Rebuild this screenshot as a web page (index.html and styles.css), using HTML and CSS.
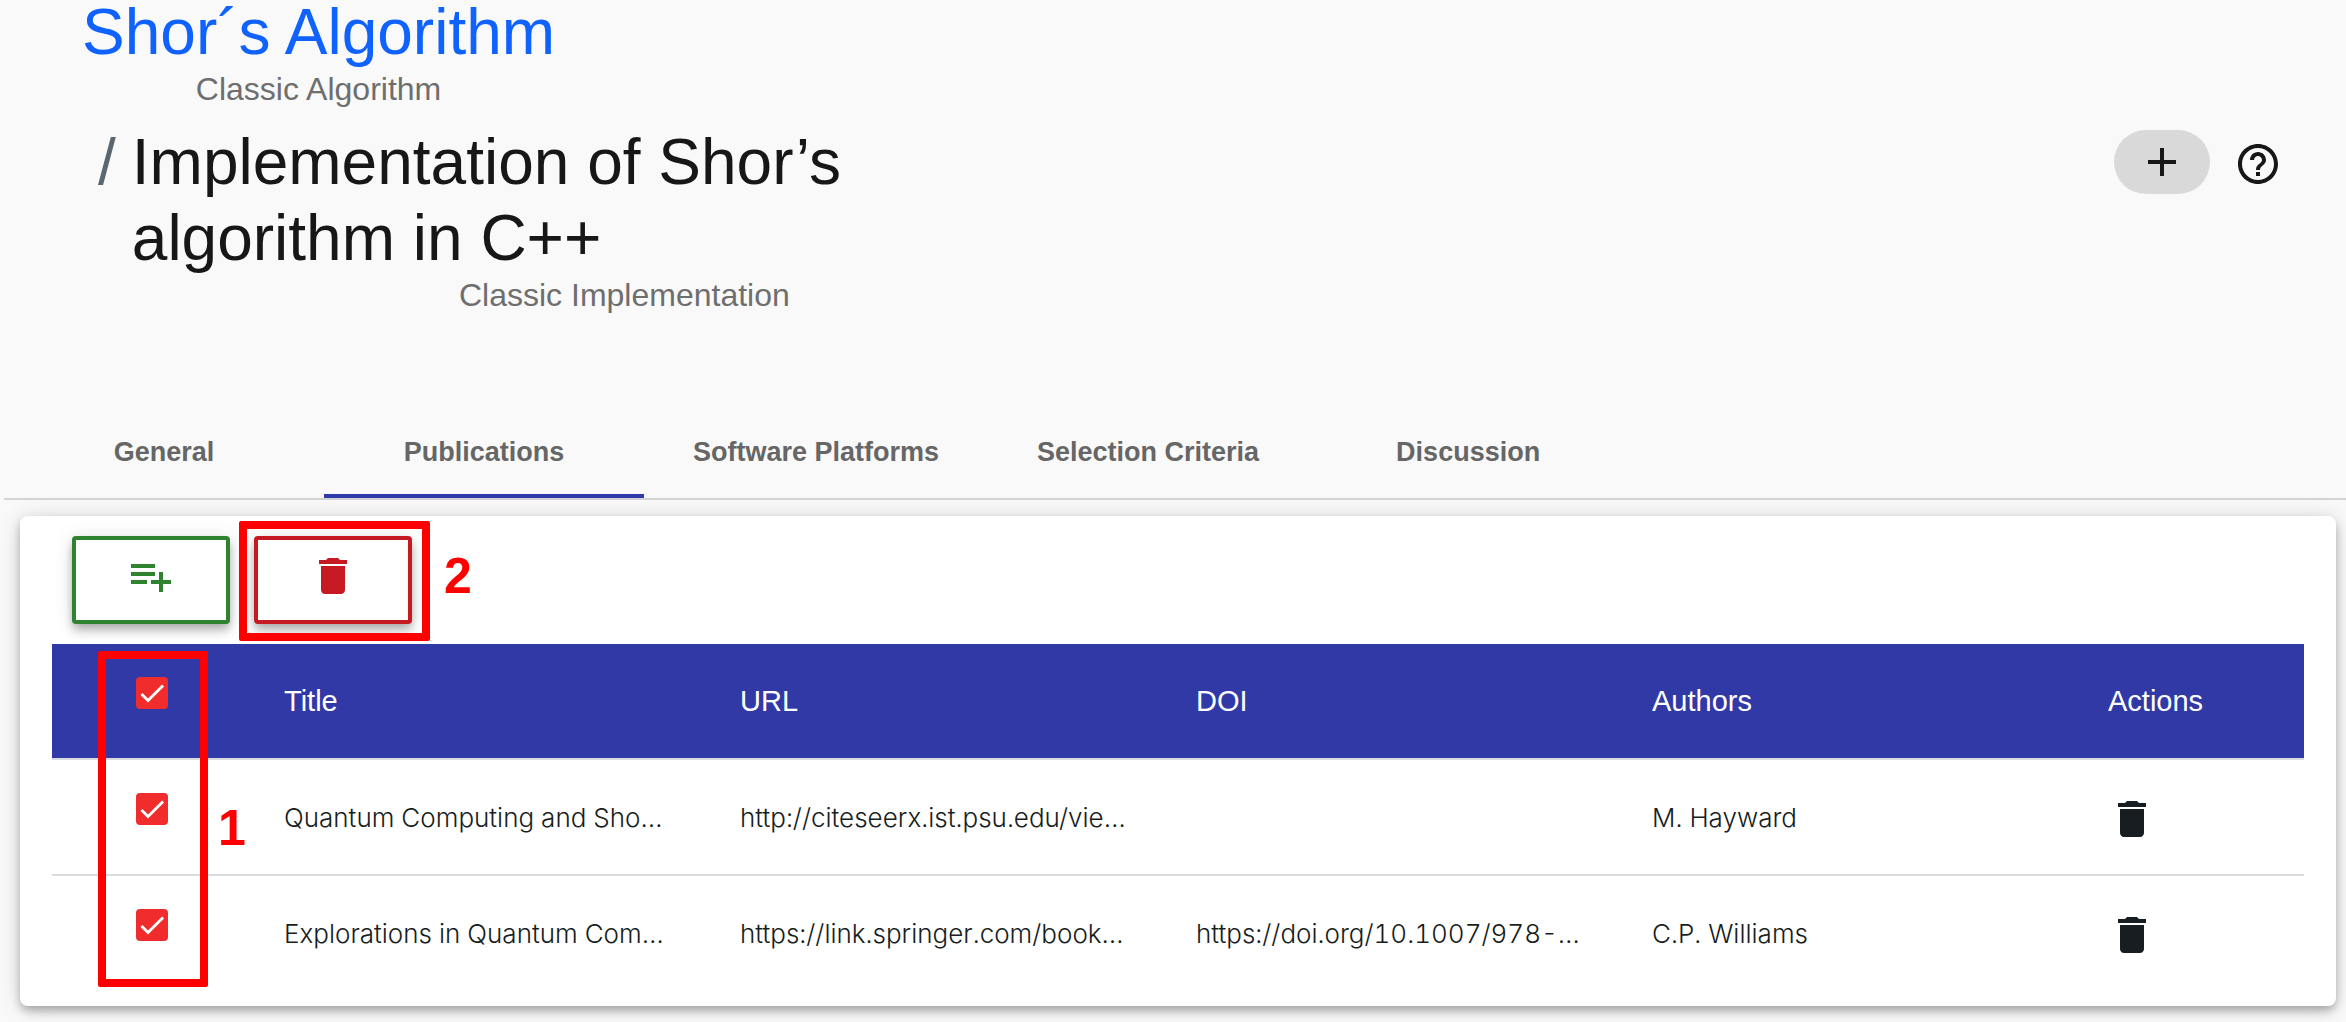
FILE: index.html
```html
<!DOCTYPE html>
<html lang="en">
<head>
  <meta charset="utf-8">
  <meta name="viewport" content="width=device-width, initial-scale=1">
  <title>Implementation of Shor’s algorithm in C++</title>
  <link rel="stylesheet" href="styles.css">
</head>
<body>
  <svg class="sprite" aria-hidden="true">
    <symbol id="icon-trash" viewBox="0 0 24 24"><path d="M6 19c0 1.100.9 2 2 2h8c1.100 0 2-.9 2-2V7H6v12zM19 4h-3.500l-1-1h-5l-1 1H5v2h14V4z"/></symbol>
    <symbol id="icon-tick" viewBox="0 0 24 24"><path d="M4.100 12.700 9 17.600 20.300 6.300" fill="none" stroke="#fff" stroke-width="2.130"/></symbol>
  </svg>

  <header class="page-header">
    <nav class="trail" aria-label="Breadcrumb">
      <div class="parent">
        <a class="title" href="#">Shor´s Algorithm</a>
        <span class="kind">Classic Algorithm</span>
      </div>
      <div class="current">
        <span class="slash">/</span>
        <div class="current-text">
          <h1 class="title">Implementation of Shor’s algorithm in C++</h1>
          <span class="kind">Classic Implementation</span>
        </div>
      </div>
    </nav>
    <div class="header-actions">
      <button class="pill" type="button" aria-label="Add">
        <svg class="icon" viewBox="0 0 24 24"><path d="M19 13h-6v6h-2v-6H5v-2h6V5h2v6h6v2z"/></svg>
      </button>
      <button class="help" type="button" aria-label="Help">
        <svg class="icon" viewBox="0 0 24 24"><path d="M11 18h2v-2h-2v2zm1-16C6.480 2 2 6.480 2 12s4.480 10 10 10 10-4.480 10-10S17.520 2 12 2zm0 18c-4.410 0-8-3.590-8-8s3.590-8 8-8 8 3.590 8 8-3.590 8-8 8zm0-14c-2.210 0-4 1.790-4 4h2c0-1.100.9-2 2-2s2 .9 2 2c0 2-3 1.750-3 5h2c0-2.250 3-2.500 3-5 0-2.210-1.790-4-4-4z"/></svg>
      </button>
    </div>
  </header>

  <nav class="tabs" aria-label="Sections">
    <a class="tab" href="#">General</a>
    <a class="tab active" href="#" aria-current="page">Publications</a>
    <a class="tab" href="#">Software Platforms</a>
    <a class="tab" href="#">Selection Criteria</a>
    <a class="tab" href="#">Discussion</a>
  </nav>

  <main class="content">
    <div class="card">
      <div class="toolbar">
        <button class="tool add" type="button" aria-label="Add publication">
          <svg class="icon" viewBox="0 0 24 24"><path d="M14 10H2v2h12v-2zm0-4H2v2h12V6zm4 8v-4h-2v4h-4v2h4v4h2v-4h4v-2h-4zM2 16h8v-2H2v2z"/></svg>
        </button>
        <button class="tool remove" type="button" aria-label="Delete selected">
          <svg class="icon"><use href="#icon-trash"/></svg>
        </button>
        <div class="mark mark-delete"></div>
        <span class="mark-number number-two">2</span>
      </div>

      <div class="table-wrap">
        <table class="table">
          <colgroup><col class="col-select"><col class="col-data"><col class="col-data"><col class="col-data"><col class="col-data"><col></colgroup>
          <thead>
            <tr>
              <th><label class="check"><input type="checkbox" aria-label="Select all" checked><svg><use href="#icon-tick"/></svg></label></th>
              <th>Title</th>
              <th>URL</th>
              <th>DOI</th>
              <th>Authors</th>
              <th>Actions</th>
            </tr>
          </thead>
          <tbody>
            <tr>
              <td><label class="check"><input type="checkbox" aria-label="Select row 1" checked><svg><use href="#icon-tick"/></svg></label></td>
              <td>Quantum Computing and Sho…</td>
              <td>http://citeseerx.ist.psu.edu/vie…</td>
              <td></td>
              <td>M. Hayward</td>
              <td><button class="row-delete" type="button" aria-label="Delete row 1"><svg class="icon"><use href="#icon-trash"/></svg></button></td>
            </tr>
            <tr>
              <td><label class="check"><input type="checkbox" aria-label="Select row 2" checked><svg><use href="#icon-tick"/></svg></label></td>
              <td>Explorations in Quantum Com…</td>
              <td>https://link.springer.com/book…</td>
              <td>https://doi.org/10.1007/978-…</td>
              <td>C.P. Williams</td>
              <td><button class="row-delete" type="button" aria-label="Delete row 2"><svg class="icon"><use href="#icon-trash"/></svg></button></td>
            </tr>
          </tbody>
        </table>
        <div class="mark mark-select"></div>
        <span class="mark-number number-one">1</span>
      </div>
    </div>
  </main>
</body>
</html>
```
FILE: styles.css
```css
* {
  box-sizing: border-box;
}

body {
  margin: 0;
  background: #f9f9f9;
  color: #171d20;
  font-family: "Liberation Sans", Arial, sans-serif;
}

button {
  padding: 0;
  border: 0;
  background: none;
  color: inherit;
  cursor: pointer;
}

.sprite {
  position: absolute;
  width: 0;
  height: 0;
}

.icon {
  display: block;
  width: 48px;
  height: 48px;
  fill: currentColor;
}

/* Header */

.page-header {
  display: flex;
  align-items: center;
  justify-content: space-between;
  padding: 0 64px 92px 82px;
}

.title {
  display: block;
  margin: 0;
  font-size: 64px;
  font-weight: 400;
  line-height: 76px;
}

.kind {
  display: block;
  color: #6e6e6e;
  font-size: 32px;
  line-height: 38px;
}

.parent {
  width: max-content;
  margin-top: -6px;
  text-align: center;
}

.parent .title {
  color: #0f62fe;
  text-decoration: none;
}

.current {
  display: flex;
  gap: 16px;
  margin-top: 16px;
  padding-left: 16px;
}

.slash {
  color: #5b6770;
  font-size: 64px;
  line-height: 76px;
}

.current-text {
  max-width: 720px;
}

.current .title {
  color: #171717;
}

.current .kind {
  padding-right: 62px;
  text-align: right;
}

.header-actions {
  display: flex;
  align-items: center;
  gap: 24px;
  margin-top: 10px;
}

.pill {
  display: grid;
  place-items: center;
  width: 96px;
  height: 64px;
  border-radius: 32px;
  background: #d9d9d9;
  color: #171717;
}

.help {
  margin-top: 4px;
  color: #171717;
}

/* Tabs */

.tabs {
  display: flex;
  margin-left: 4px;
  border-bottom: 2px solid #d4d4d4;
}

.tab {
  min-width: 320px;
  height: 92px;
  padding: 0 49px;
  border-bottom: 4px solid transparent;
  color: #666;
  font-size: 27px;
  font-weight: 700;
  line-height: 92px;
  text-align: center;
  text-decoration: none;
}

.tab.active {
  border-color: #3039a8;
}

/* Card */

.content {
  padding: 16px 10px 16px 20px;
}

.card {
  padding: 20px 32px 16px;
  border-radius: 8px;
  background: #fff;
  box-shadow: 0 6px 10px -2px rgba(0, 0, 0, 0.2), 0 4px 12px rgba(0, 0, 0, 0.14), 0 2px 24px rgba(0, 0, 0, 0.12);
}

.toolbar {
  position: relative;
  display: flex;
  gap: 24px;
  padding: 0 20px 20px;
}

.tool {
  display: flex;
  justify-content: center;
  width: 158px;
  height: 88px;
  padding-top: 12px;
  border: 4px solid currentColor;
  border-radius: 4px;
  background: #fff;
  box-shadow: 0 4px 8px -2px rgba(0, 0, 0, 0.2), 0 8px 10px rgba(0, 0, 0, 0.14), 0 2px 20px rgba(0, 0, 0, 0.12);
}

.add {
  color: #2f832e;
}

.remove {
  color: #c51a22;
}

/* Table */

.table-wrap {
  position: relative;
}

.table {
  width: 100%;
  border-collapse: separate;
  border-spacing: 0;
  table-layout: fixed;
}

.col-select {
  width: 232px;
}

.col-data {
  width: 456px;
}

.table th,
.table td {
  height: 116px;
  padding: 0;
  border-bottom: 2px solid #d9dbe0;
  overflow: hidden;
  text-align: left;
  white-space: nowrap;
}

.table tbody tr:last-child td {
  height: 114px;
  border-bottom: 0;
}

.table th {
  background: #3139a7;
  background-clip: padding-box;
  color: #fff;
  font-size: 29px;
  font-weight: 400;
}

.table td {
  font-family: Inter, "Liberation Sans", sans-serif;
  font-size: 26px;
  font-variant-numeric: tabular-nums;
  font-weight: 300;
}

.check {
  display: grid;
  width: 32px;
  height: 32px;
  margin: 0 0 16px 84px;
}

.check input,
.check svg {
  grid-area: 1 / 1;
  width: 32px;
  height: 32px;
  margin: 0;
}

.check svg {
  pointer-events: none;
}

.check input {
  appearance: none;
  border: 4px solid #f02c2c;
  border-radius: 4px;
}

.check input:checked {
  background: #f02c2c;
}

.row-delete {
  display: block;
  margin-top: 4px;
}

/* Numbered highlights over the card */

.mark {
  position: absolute;
  border: 8px solid #f00;
  border-radius: 2px;
  pointer-events: none;
}

.mark-delete {
  top: -15px;
  left: 187px;
  width: 191px;
  height: 120px;
}

.mark-select {
  top: 7px;
  left: 46px;
  width: 110px;
  height: 336px;
}

.mark-number {
  position: absolute;
  color: #f00;
  font-size: 50px;
  font-weight: 700;
  line-height: 56px;
}

.number-two {
  top: 12px;
  left: 392px;
}

.number-one {
  top: 156px;
  left: 166px;
}
```
